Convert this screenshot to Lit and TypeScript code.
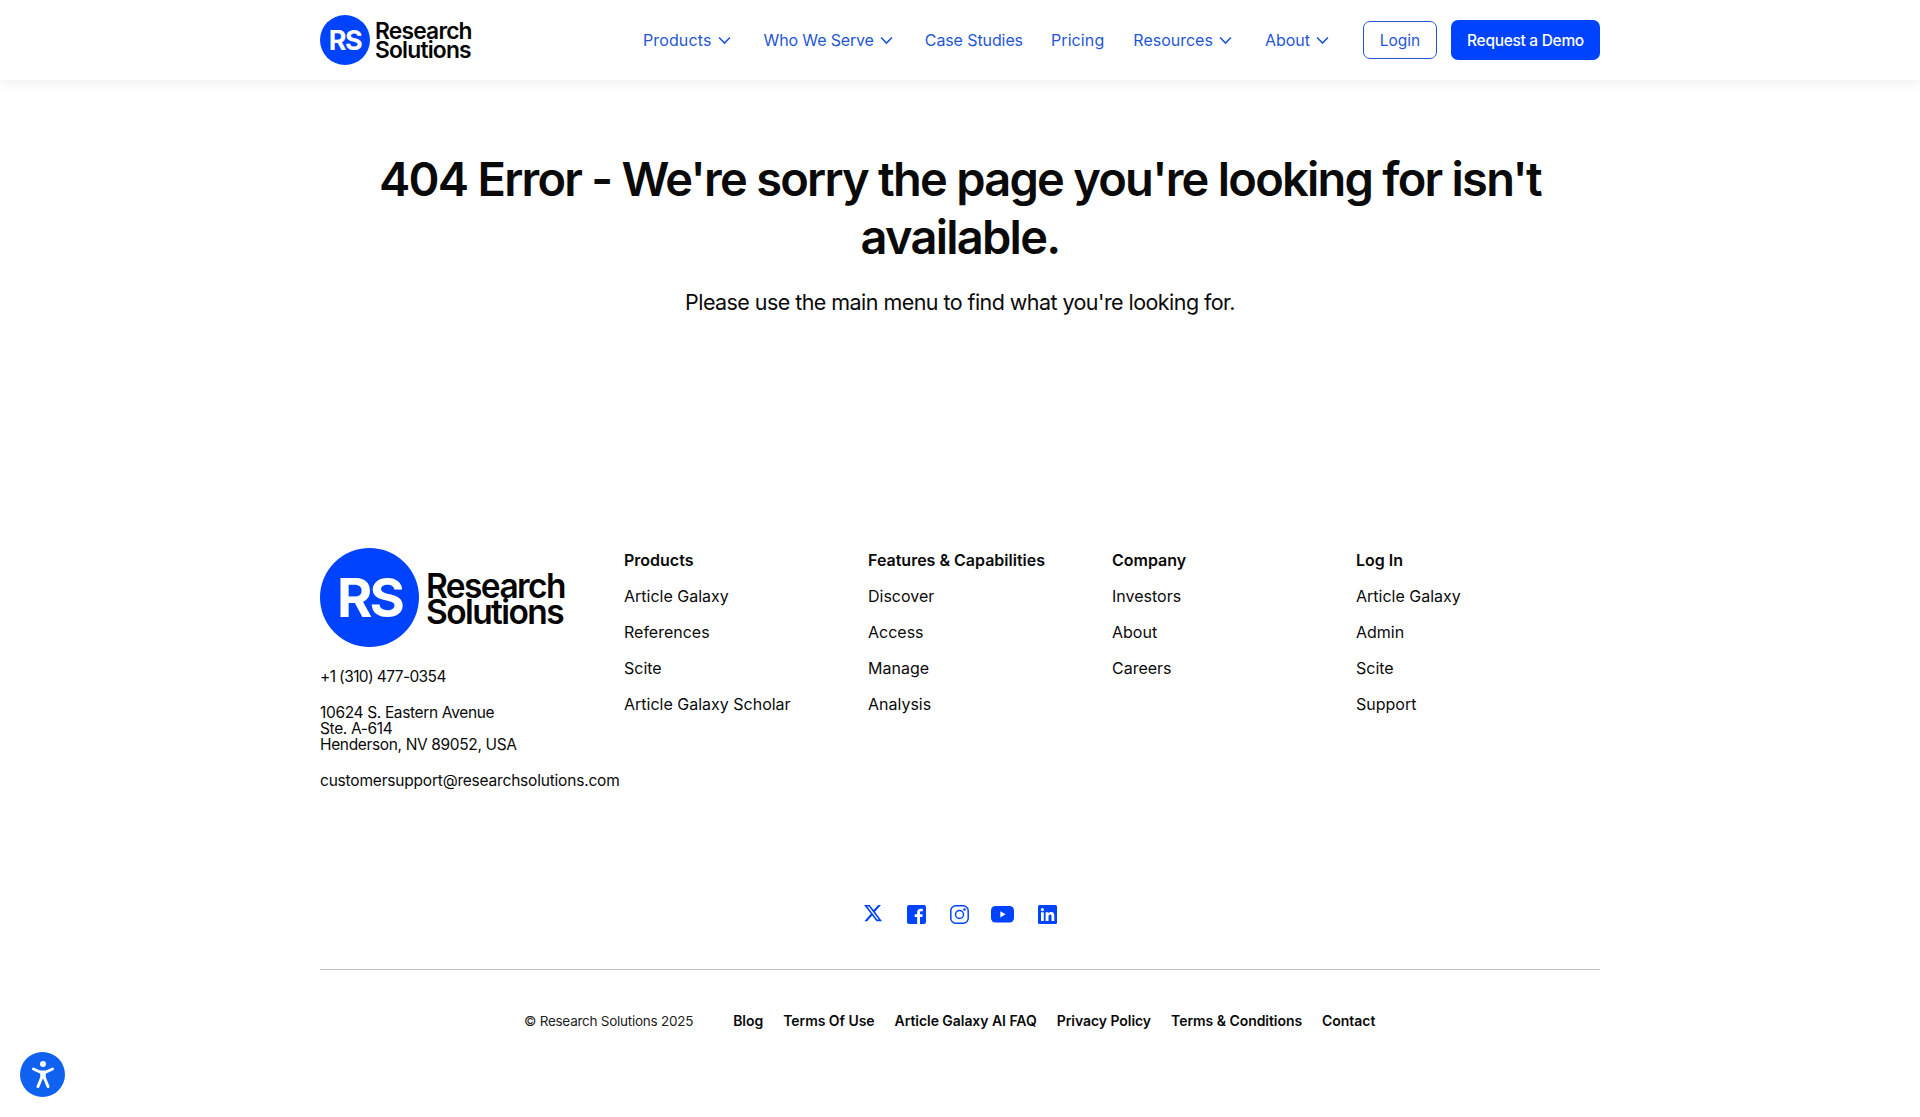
import { LitElement, html, css } from "lit";
import { customElement } from "lit/decorators.js";

const chev = html`<svg class="chev" viewBox="0 0 12 8" width="13" height="9"><path d="M1 1.200 6 6.400 11 1.200" fill="none" stroke="currentColor" stroke-width="1.500"/></svg>`;

const columns = [
  { h: "Products", l: ["Article Galaxy", "References", "Scite", "Article Galaxy Scholar"] },
  { h: "Features & Capabilities", l: ["Discover", "Access", "Manage", "Analysis"] },
  { h: "Company", l: ["Investors", "About", "Careers"] },
  { h: "Log In", l: ["Article Galaxy", "Admin", "Scite", "Support"] },
];

@customElement("app-root")
export class AppRoot extends LitElement {
  static styles = css`
    :host { display: block; font-family: Inter, "Liberation Sans", sans-serif; color: #0a0a0a; background: #fff; height: 1117px; overflow: hidden; position: relative; }
    a { color: inherit; text-decoration: none; }
    header { height: 80px; box-shadow: 0 2px 14px rgba(0,0,0,.07); display: flex; justify-content: center; }
    .wrap { width: 1280px; }
    .bar { display: flex; align-items: center; justify-content: space-between; }
    .logo { display: flex; align-items: center; gap: 5px; }
    .circle { background: #0043ff; color: #fff; border-radius: 50%; display: flex; align-items: center; justify-content: center; font-weight: 700; flex: none; }
    .c-s { width: 50px; height: 50px; font-size: 27px; letter-spacing: -1.500px; }
    .c-l { width: 99px; height: 99px; font-size: 54px; letter-spacing: -3px; }
    .wordmark { font-weight: 600; color: #050505; }
    .w-s { font-size: 22.800px; line-height: 19px; letter-spacing: -.8px; }
    .w-l { font-size: 33.500px; line-height: 26px; letter-spacing: -1.600px; padding-top: 2px; }
    nav { display: flex; align-items: center; font-size: 16px; color: #1f57d6; }
    nav a.i { display: flex; align-items: center; gap: 6px; }
    .m29 { margin-right: 29px; }
    .m32 { margin-right: 32px; }
    .m33 { margin-right: 33px; }
    .m28 { margin-right: 28px; }
    .wide { letter-spacing: .15px; }
    .tight { letter-spacing: -.15px; }
    .snug { letter-spacing: -.1px; }
    .loose { letter-spacing: .1px; }
    .chev { display: block; margin-top: 1px; }
    .login { margin-left: 34px; width: 74px; height: 38px; box-sizing: border-box; border: 1px solid #1f57c8; border-radius: 7px; display: flex; align-items: center; justify-content: center; font-size: 15.500px; }
    .demo { margin-left: 14px; width: 149px; height: 40px; background: #0043ff; color: #fff; border-radius: 7px; display: flex; align-items: center; justify-content: center; font-weight: 500; letter-spacing: -.3px; font-size: 15.500px; }
    main { text-align: center; padding-top: 70px; height: 468px; box-sizing: border-box; display: flex; flex-direction: column; align-items: center; }
    h1 { margin: 0; font-size: 47px; line-height: 58px; font-weight: 600; letter-spacing: -1.750px; width: 1280px; }
    .sub { margin: 21px 0 0; font-size: 21.500px; line-height: 30px; letter-spacing: -.56px; }
    .foot { display: flex; justify-content: center; }
    .fgrid { display: grid; grid-template-columns: 304px 244px 244px 244px 244px; height: 346px; }
    .contact { font-size: 15.500px; line-height: 16px; letter-spacing: -.35px; }
    .contact p { margin: 0 0 20px; white-space: nowrap; }
    .contact .phone { letter-spacing: -.6px; }
    .contact .email { letter-spacing: -.2px; }
    .contact .logo { margin-bottom: 22px; gap: 7px; }
    .col { font-size: 16px; padding-top: 2px; display: flex; flex-direction: column; gap: 16px; }
    .col div, .col a { line-height: 20px; display: block; white-space: nowrap; }
    .col .h { font-weight: 600; }
    .social { display: flex; align-items: center; justify-content: center; height: 40px; color: #0043ff; }
    .social span { display: flex; justify-content: center; }
    .s1 { margin-right: 24px; }
    .x { margin-top: -3px; }
    .s2 { margin-right: 22px; }
    .rule { height: 1px; background: #c4c4c4; margin-top: 35px; }
    .legal { display: flex; align-items: center; height: 101px; font-size: 14px; letter-spacing: -.05px; padding-left: 204px; }
    .legal .copy { margin-right: 40px; color: #222; font-size: 13.500px; letter-spacing: -.25px; }
    .legal a { font-weight: 600; margin-right: 20px; }
    .a11y { position: absolute; left: 20px; top: 1052px; width: 45px; height: 45px; border-radius: 50%; background: #0f62f0; display: flex; align-items: center; justify-content: center; }
  `;

  render() {
    return html`
      <header><div class="wrap bar">
        <div class="logo"><div class="circle c-s">RS</div><div class="wordmark w-s">Research<br />Solutions</div></div>
        <nav>
          <a class="i m33 wide">Products ${chev}</a>
          <a class="i m32 tight">Who We Serve ${chev}</a>
          <a class="i m28 snug">Case Studies</a>
          <a class="i m29 loose">Pricing</a>
          <a class="i m33">Resources ${chev}</a>
          <a class="i">About ${chev}</a>
          <a class="login">Login</a>
          <a class="demo">Request a Demo</a>
        </nav>
      </div></header>
      <main>
        <h1>404 Error - We're sorry the page you're looking for isn't available.</h1>
        <p class="sub">Please use the main menu to find what you're looking for.</p>
      </main>
      <div class="foot"><div class="wrap">
        <div class="fgrid">
          <div class="contact">
            <div class="logo"><div class="circle c-l">RS</div><div class="wordmark w-l">Research<br />Solutions</div></div>
            <p class="phone">+1 (310) 477-0354</p>
            <p>10624 S. Eastern Avenue<br />Ste. A-614<br />Henderson, NV 89052, USA</p>
            <p class="email">customersupport@researchsolutions.com</p>
          </div>
          ${columns.map(c => html`<div class="col"><div class="h">${c.h}</div>${c.l.map(x => html`<a>${x}</a>`)}</div>`)}
        </div>
        <div class="social">
          <span class="s1"><svg class="x" width="20" height="20" viewBox="0 0 24 24" fill="currentColor"><path fill-rule="evenodd" d="M18.240 2.250h3.310l-7.230 8.260 8.500 11.240h-6.660l-5.210-6.820-5.970 6.820H1.680l7.730-8.840L1.250 2.250h6.830l4.710 6.230zM17.080 19.770h1.830L7.080 4.130H5.120z"/></svg></span>
          <span class="s1"><svg width="19" height="19" viewBox="0 0 18 18"><rect width="18" height="18" rx="2" fill="currentColor"/><path d="M12.300 18v-6.600h2.200l.4-2.600h-2.600V7.200c0-.8.3-1.300 1.400-1.300H15V3.600c-.3 0-1.100-.1-2-.1-2 0-3.400 1.200-3.400 3.500v1.800H7.300v2.600h2.300V18z" fill="#fff"/></svg></span>
          <span class="s2"><svg width="19" height="19" viewBox="0 0 19 19" fill="none" stroke="currentColor" stroke-width="1.500"><rect x=".8" y=".8" width="17.400" height="17.400" rx="5"/><circle cx="9.500" cy="9.500" r="4"/><circle cx="14.500" cy="4.500" r=".6" fill="currentColor"/></svg></span>
          <span class="s1"><svg width="23" height="17" viewBox="0 0 23 17"><rect width="23" height="16.500" rx="4.500" fill="currentColor"/><path d="M9.300 5.200v6.200l5.300-3.100z" fill="#fff"/></svg></span>
          <span><svg width="19" height="19" viewBox="0 0 19 19"><rect width="19" height="19" rx="1.500" fill="currentColor"/><path d="M3 7.300h2.800V16H3zM4.400 3a1.600 1.600 0 1 1 0 3.200 1.600 1.600 0 0 1 0-3.200zM7.600 7.300h2.700v1.200c.4-.7 1.300-1.400 2.700-1.400 2.800 0 3.300 1.800 3.300 4.200V16h-2.800v-4.100c0-1 0-2.300-1.400-2.300s-1.600 1.100-1.600 2.200V16H7.600z" fill="#fff"/></svg></span>
        </div>
        <div class="rule"></div>
        <div class="legal">
          <span class="copy">© Research Solutions 2025</span>
          <a>Blog</a><a>Terms Of Use</a><a>Article Galaxy AI FAQ</a><a>Privacy Policy</a><a>Terms &amp; Conditions</a><a>Contact</a>
        </div>
      </div></div>
      <div class="a11y"><svg width="30" height="30" viewBox="0 0 30 30" fill="none" stroke="#fff" stroke-linecap="round" stroke-linejoin="round"><circle cx="15" cy="4" r="3" fill="#fff" stroke="none"/><path d="M5.500 9 12 12h6l6.500-3" stroke-width="3"/><path d="M15 12v6.500" stroke-width="5.500" stroke-linecap="butt"/><path d="M13.500 18 10 26.500M16.500 18l3.500 8.500" stroke-width="3"/></svg></div>
    `;
  }
}
